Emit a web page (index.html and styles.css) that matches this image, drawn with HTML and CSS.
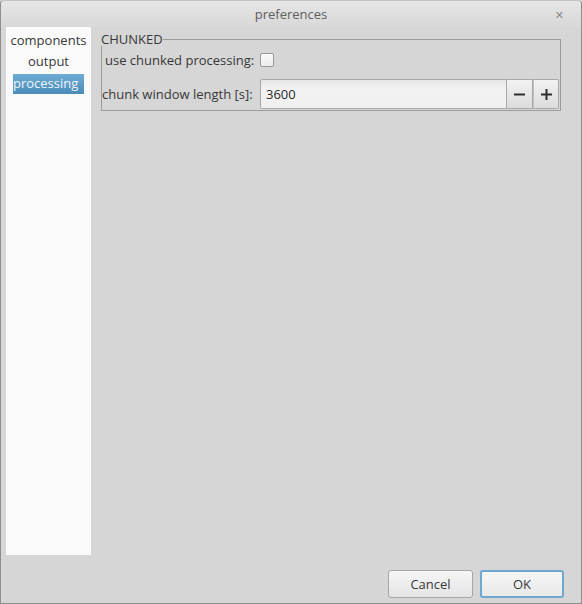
FILE: index.html
```html
<!DOCTYPE html>
<html>
<head>
<meta charset="utf-8">
<link rel="stylesheet" href="styles.css">
</head>
<body>
<div class="window">
  <div class="titlebar">
    <span class="title">preferences</span>
    <span class="close">✕</span>
  </div>
  <div class="content">
    <div class="sidebar">
      <div class="nav-item">components</div>
      <div class="nav-item">output</div>
      <div class="nav-item active">processing</div>
    </div>
    <div class="main">
      <div class="group">
        <div class="group-head">
          <span class="group-title">CHUNKED</span>
          <span class="group-rule"></span>
        </div>
        <div class="group-body">
          <div class="row row-check">
            <span class="label">use chunked processing:</span>
            <span class="checkbox"></span>
          </div>
          <div class="row row-spin">
            <span class="label label2">chunk window length [s]:</span>
            <div class="spin">
              <div class="spin-input">3600</div>
              <div class="spin-btn">
                <svg width="11" height="11" viewBox="0 0 11 11"><rect x="0" y="4.5" width="11" height="2" fill="#2e2e2e"/></svg>
              </div>
              <div class="spin-btn">
                <svg width="11" height="11" viewBox="0 0 11 11"><rect x="0" y="4.5" width="11" height="2" fill="#2e2e2e"/><rect x="4.5" y="0" width="2" height="11" fill="#2e2e2e"/></svg>
              </div>
            </div>
          </div>
        </div>
      </div>
    </div>
  </div>
  <div class="footer">
    <button class="btn">Cancel</button>
    <button class="btn btn-ok">OK</button>
  </div>
</div>
</body>
</html>
```

FILE: styles.css
```css
html, body {
  margin: 0;
  padding: 0;
  background: #d6d6d6;
}
body {
  font-family: "Open Sans", "DejaVu Sans", sans-serif;
  font-size: 13px;
  color: #383838;
}
.window {
  width: 582px;
  height: 604px;
  box-sizing: border-box;
  border-left: 1px solid #8e8e8e;
  border-right: 1px solid #8e8e8e;
  border-bottom: 1px solid #8e8e8e;
  border-top: 1px solid #c4c4c4;
  border-radius: 4px 4px 0 0;
  background: #d6d6d6;
  display: flex;
  flex-direction: column;
}
.titlebar {
  height: 26px;
  flex: none;
  display: flex;
  align-items: center;
  justify-content: center;
  position: relative;
  background: linear-gradient(#e6e6e6, #d8d8d8);
  border-radius: 4px 4px 0 0;
}
.title {
  color: #5e5e5e;
  font-size: 13px;
}
.close {
  position: absolute;
  right: 17px;
  top: 6px;
  font-size: 11px;
  font-weight: bold;
  color: #8a8a8a;
}
.content {
  flex: none;
  display: flex;
  padding: 0 5px;
  height: 528px;
}
.sidebar {
  width: 85px;
  background: #fafafa;
  display: flex;
  flex-direction: column;
  align-items: center;
  padding-top: 3px;
  box-sizing: border-box;
}
.nav-item {
  height: 21px;
  line-height: 20px;
  padding: 0 1px;
}
.nav-item.active {
  width: 71px;
  box-sizing: border-box;
  margin-top: 2px;
  height: 20px;
  line-height: 19px;
  color: #eef4fa;
  background: linear-gradient(#6eacd4, #4a8bb8);
  padding-left: 0;
}
.main {
  flex: 1;
  padding: 6px 15px 0 10px;
}
.group-head {
  display: flex;
  height: 13px;
}
.group-title {
  line-height: 13px;
}
.group-rule {
  flex: 1;
  margin-top: 6px;
  border-top: 1px solid #9c9c9c;
  border-right: 1px solid #9c9c9c;
}
.group-body {
  border-left: 1px solid #9c9c9c;
  border-right: 1px solid #9c9c9c;
  border-bottom: 1px solid #9c9c9c;
  height: 65px;
  padding-top: 7px;
  box-sizing: border-box;
}
.row {
  display: flex;
  align-items: center;
}
.row-check {
  height: 14px;
  padding-left: 3px;
}
.label {
  width: 155px;
  flex: none;
}
.label2 {
  width: 158px;
}
.checkbox {
  width: 12px;
  height: 12px;
  border: 1px solid #989898;
  border-radius: 2px;
  background: linear-gradient(#fbfbfb, #ececec);
}
.row-spin {
  margin-top: 12px;
  height: 30px;
}
.spin {
  display: flex;
  height: 30px;
}
.spin-input {
  width: 247px;
  height: 30px;
  box-sizing: border-box;
  border: 1px solid #a8a8a8;
  border-radius: 2px 0 0 2px;
  background: linear-gradient(#e6e6e6, #f2f2f2 30%, #f0f0f0);
  padding-left: 5px;
  line-height: 28px;
  color: #2a2a2a;
}
.spin-btn {
  width: 26px;
  height: 30px;
  box-sizing: border-box;
  border: 1px solid #a8a8a8;
  border-left: none;
  background: linear-gradient(#f2f2f2, #dcdcdc);
  display: flex;
  align-items: center;
  justify-content: center;
}
.spin-btn:last-child {
  border-left: 1px solid #c0c0c0;
  border-radius: 0 2px 2px 0;
}
.footer {
  flex: 1;
  display: flex;
  justify-content: flex-end;
  align-items: flex-start;
  padding: 15px 17px 0 0;
  gap: 7px;
}
.btn {
  font-family: inherit;
  font-size: 13px;
  color: #383838;
  width: 85px;
  height: 28px;
  border: 1px solid #a6a6a6;
  border-radius: 3px;
  background: linear-gradient(#f6f6f6, #e4e4e4);
  padding: 0;
}
.btn-ok {
  border: 2px solid #6ca8d0;
  width: 84px;
  background: linear-gradient(#f6f6f6, #e8e8e8);
}
```
